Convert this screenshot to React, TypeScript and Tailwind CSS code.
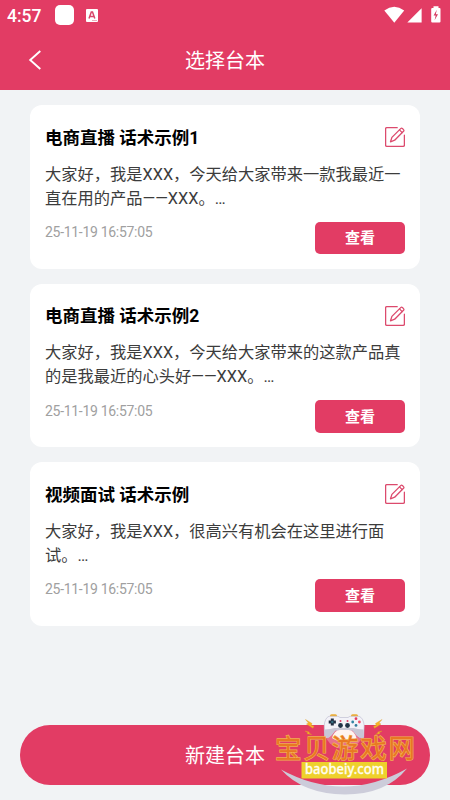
const scripts = [
  {
    title: '电商直播 话术示例1',
    lines: ['大家好，我是XXX，今天给大家带来一款我最近一', '直在用的产品——XXX。…'],
  },
  {
    title: '电商直播 话术示例2',
    lines: ['大家好，我是XXX，今天给大家带来的这款产品真', '的是我最近的心头好——XXX。…'],
  },
  {
    title: '视频面试 话术示例',
    lines: ['大家好，我是XXX，很高兴有机会在这里进行面', '试。…'],
  },
];

function StatusBar() {
  return (
    <div className="flex h-[30px] items-center pl-[7px] pr-[8px] text-white">
      <span className="w-[48px] pt-px text-[17.5px] font-medium leading-[30px]">4:57</span>
      <span className="h-[20px] w-[19px] rounded-[5px] bg-white" />
      <svg className="ml-[12px]" width="12" height="13" viewBox="0 0 12 13">
        <rect width="12" height="13" rx="1" fill="#fff" />
        <path d="M3 9.5 5.3 3h1.2l2.3 6.5M4 7.5h4" fill="none" stroke="#d8466a" strokeWidth="1.5" />
        <path d="M6 11.5h5" stroke="#e99aae" strokeWidth="0.8" />
      </svg>
      <svg className="ml-auto" width="58" height="18" viewBox="385 6 58 18">
        <path d="M385.3 10.5Q395.2 3.2 405.2 10.5L395.3 22.7Z" fill="#fff" />
        <path d="M422.6 8.3V22.6H408.3Z" fill="#fff" />
        <path d="M434.5 6.2h5v1.8h1q1 0 1 1v12.6q0 1-1 1h-7.3q-1 0-1-1V9q0-1 1-1h1.3Z" fill="#fff" />
        <path d="m437.8 9.7-3.2 5.7h2.1l-1.1 4.8 3.4-5.9h-2.2Z" fill="#d63860" />
      </svg>
    </div>
  );
}

function EditIcon() {
  return (
    <svg
      width="20"
      height="20"
      viewBox="0 0 20 20"
      fill="none"
      stroke="#dc4a6d"
      strokeWidth="1.3"
      strokeLinejoin="round"
      strokeLinecap="round"
    >
      <path d="M12.2.7H1.8Q.6.7.6 1.9v16.2q0 1.2 1.2 1.2h16.3q1.3 0 1.3-1.2V8.2" />
      <path d="M5.5 14.8 6.9 10.4 15.7 1.6q.8-.8 1.7-.1l1.1 1.1q.8.8 0 1.7L9.7 13.2Z" />
      <path d="m14.5 2.9 2.7 2.7" />
    </svg>
  );
}

function ScriptCard({ title, lines }: { title: string; lines: string[] }) {
  return (
    <article className="h-[163.7px] rounded-[12px] bg-white px-[15px] pt-[20px]">
      <div className="flex h-[24px] items-center justify-between">
        <h2 className="pt-px text-[17.5px] font-bold leading-[24px] text-black">{title}</h2>
        <EditIcon />
      </div>
      <div className="mt-[13.8px] whitespace-nowrap text-[16.26px] leading-[24px] text-[#3c3c3c]">
        {lines.map((line) => (
          <p key={line}>{line}</p>
        ))}
      </div>
      <div className="mt-[10.5px] flex items-start justify-between">
        <time className="mt-[0.7px] text-[14px] leading-[20px] tracking-[-0.3px] text-[#a0a0a0]">25-11-19 16:57:05</time>
        <button className="mt-[0.3px] h-[32.7px] w-[90px] rounded-[5px] bg-[#e23c64] pt-px text-[15px] font-bold text-white">
          查看
        </button>
      </div>
    </article>
  );
}

function Watermark() {
  return (
    <svg className="absolute left-[270px] top-[705px]" width="160" height="95" viewBox="270 705 160 95">
      <circle cx="344" cy="729" r="20" fill="#f5f2f0" opacity="0.3" />
      <g fill="#f7b526" stroke="#dc9a28" strokeWidth="0.4">
        <path d="m305.5 719.5 6.5 4-.8 2 2.7.5-.9 2.3-6.5-4.2 2-1Z" />
        <path d="m382 719.5-6.5 4 .8 2-2.7.5.9 2.3 6.5-4.2-2-1Z" />
        <path d="m305 731 4.3 1-.2 1.3 2.6 1.2-4.6-.7.7-1.1Z" />
        <path d="m382 731-4.3 1 .2 1.3-2.6 1.2 4.6-.7-.7-1.1Z" />
      </g>
      <path d="M330 717.5v-1.8q0-1.5 1.5-1.5h4q1.5 0 1.5 1.5v1.8M351 717.5v-1.8q0-1.5 1.5-1.5h4q1.5 0 1.5 1.5v1.8" fill="#ecad35" />
      <path
        d="M329 716.3h9l2 1.2h8l2-1.2h9q4.3 1.5 5.2 9.2l-.5 12q-4.3 1-7-2.3l-4-4.9h-17.4l-4 4.9q-2.7 3.3-6.7 2.3l-.4-12q.8-7.7 4.8-9.2Z"
        fill="#f3f2f8"
        stroke="#b9b7cc"
        strokeWidth="0.6"
      />
      <path d="M324.8 729.5q6-.2 9.5-1.5h19.5q3.5 1.3 9.8 1.5l.1 8q-4.3 1-7-2.3l-4-4.9h-17.4l-4 4.9q-2.7 3.3-6.5 2.3Z" fill="#c8c7d6" />
      <path d="M332 738q2.5-8 8-8h8.5q5.5 0 8 8-5 3.5-12.2 3.5T332 738Z" fill="#fff5f0" />
      <path d="M332.3 718.4v7.2M328.7 722h7.2" stroke="#233044" strokeWidth="3" />
      <circle cx="332.3" cy="722" r="1.2" fill="#347083" />
      <circle cx="340.5" cy="725.5" r="2.4" fill="#213348" />
      <circle cx="347.5" cy="725.5" r="2.4" fill="#213348" />
      <circle cx="340.5" cy="721" r="1" fill="#dc3d64" />
      <circle cx="347.5" cy="721" r="1" fill="#dc3d64" />
      <circle cx="356" cy="718.7" r="1.4" fill="#e23c64" />
      <circle cx="359.4" cy="722" r="1.4" fill="#f05069" />
      <circle cx="356" cy="725.4" r="1.4" fill="#327d9b" />
      <circle cx="352.7" cy="722" r="1.4" fill="#3185a3" />
      <path d="M281 769.5Q344 804 407 768.5Q386 794.5 345 794.5Q303 794 281 769.5Z" fill="#ccccda" />
      <text
        x="275"
        y="758"
        textLength="140"
        lengthAdjust="spacing"
        className="font-['Noto_Sans_CJK_SC',sans-serif] text-[26.5px] font-normal [paint-order:stroke]"
        fill="#e97822"
        stroke="#f0b050"
        strokeWidth="1.3"
      >
        宝贝游戏网
      </text>
      <rect x="301.5" y="762" width="85.5" height="16.5" fill="#eed12c" />
      <text
        x="305"
        y="774.3"
        textLength="79"
        lengthAdjust="spacingAndGlyphs"
        className="font-['Noto_Sans',sans-serif] text-[14.5px] font-medium"
        fill="#fffdf0"
        stroke="#fffdf0"
        strokeWidth="0.3"
      >
        baobeiy.com
      </text>
    </svg>
  );
}

export default function App() {
  return (
    <div className="relative flex h-[800px] w-[450px] flex-col overflow-hidden bg-[#f1f3f5] font-[Roboto,'Noto_Sans_CJK_SC',sans-serif]">
      <header className="h-[90px] shrink-0 bg-[#e23c64] text-white">
        <StatusBar />
        <div className="grid h-[60px] grid-cols-[60px_1fr_60px] items-center">
          <svg className="ml-[28px]" width="14" height="20" viewBox="0 0 14 20" fill="none" stroke="#fff" strokeWidth="1.9">
            <path d="M12.3 1 2.2 10l10.1 9" />
          </svg>
          <h1 className="pt-[2px] text-center text-[20px] leading-[30px]">选择台本</h1>
        </div>
      </header>
      <main className="flex flex-1 flex-col gap-[15px] px-[30px] pt-[15px]">
        {scripts.map((script) => (
          <ScriptCard key={script.title} {...script} />
        ))}
      </main>
      <footer className="px-5 pb-[15px]">
        <button className="block h-[60px] w-full rounded-full bg-[#e23c64] pt-[2px] text-[20px] text-white">新建台本</button>
      </footer>
      <Watermark />
    </div>
  );
}
